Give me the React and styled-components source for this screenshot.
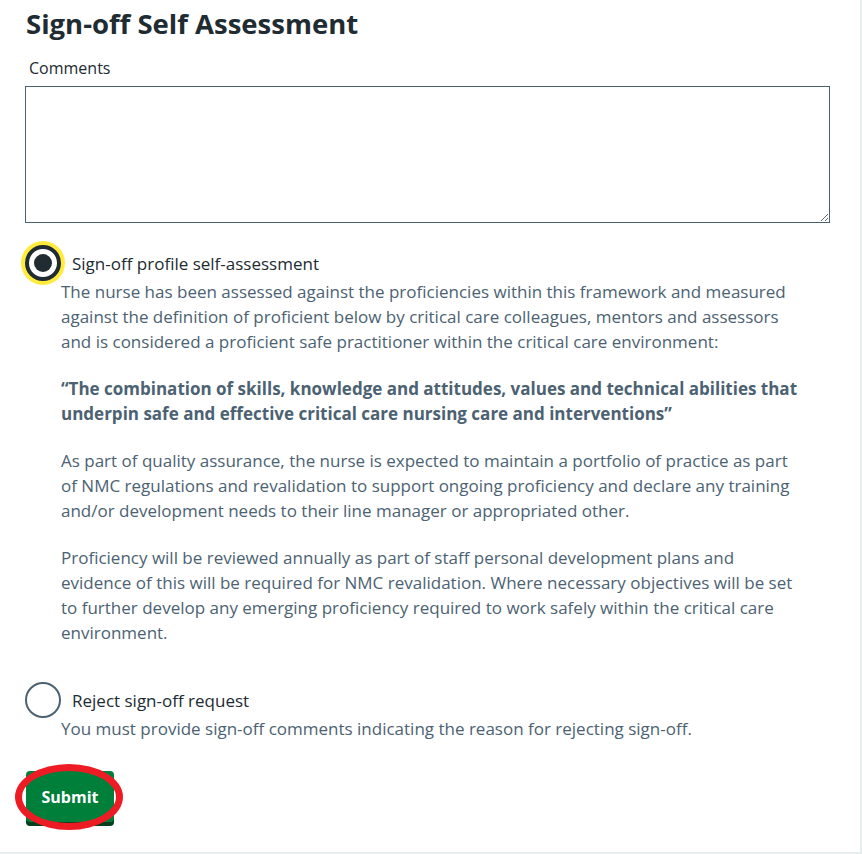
import React, { useState } from "react"
import styled, { createGlobalStyle } from "styled-components"

const GlobalStyle = createGlobalStyle`
  html, body {
    margin: 0;
    padding: 0;
    background: #ffffff;
  }
  body {
    font-family: "Open Sans", "Noto Sans", Arial, sans-serif;
    color: #212b32;
    -webkit-font-smoothing: antialiased;
  }
`

const Card = styled.div`
  width: 835px;
  height: 852px;
  padding: 0 0 0 25px;
  background: #fff;
  border-right: 2px solid #e8edee;
  border-bottom: 2px solid #e8edee;
  box-sizing: content-box;
`

const Heading = styled.h1`
  margin: 0;
  padding: 6px 0 0 1px;
  font-size: 27.5px;
  line-height: 36px;
  font-weight: 700;
  color: #212b32;
`

const FieldLabel = styled.label`
  display: block;
  margin: 14px 0 0 4px;
  font-size: 16px;
  line-height: 25px;
  color: #212b32;
`

const TextArea = styled.textarea`
  display: block;
  width: 805px;
  height: 137px;
  margin: 5px 0 0 0;
  box-sizing: border-box;
  border: 1px solid #4c6272;
  border-radius: 0;
  resize: vertical;
  font-family: inherit;
  font-size: 16px;
  padding: 4px;
  outline: none;
`

const Options = styled.div`
  display: flex;
  flex-direction: column;
  gap: 37px;
  margin-top: 22px;
`

const Option = styled.div`
  display: grid;
  grid-template-columns: 37px 744px;
  align-items: center;
`

const RadioCircle = styled.button`
  width: 36px;
  height: 36px;
  padding: 0;
  margin: 0;
  border-radius: 50%;
  box-sizing: border-box;
  background: #fff;
  cursor: pointer;
  display: flex;
  align-items: center;
  justify-content: center;
  border: ${p => (p.checked ? "4px solid #212b32" : "2px solid #4c6272")};
  box-shadow: ${p => (p.checked ? "0 0 0 4px #ffeb3b" : "none")};
  &::after {
    content: "";
    display: ${p => (p.checked ? "block" : "none")};
    width: 18px;
    height: 18px;
    border-radius: 50%;
    background: #212b32;
  }
`

const OptionLabel = styled.span`
  padding-left: 10px;
  font-size: 17px;
  line-height: 25px;
  color: #212b32;
`

const Hint = styled.div`
  grid-column: 2;
  margin: -2px 0 0 -1px;
  font-size: 17px;
  line-height: 25px;
  color: #4c6272;
  p {
    margin: 0 0 22px 0;
  }
  p:last-child {
    margin-bottom: 0;
  }
  strong {
    font-weight: 700;
  }
`

const Actions = styled.div`
  margin-top: 30px;
  position: relative;
  width: 90px;
`

const SubmitButton = styled.button`
  display: block;
  margin-left: 1px;
  width: 88px;
  height: 51px;
  border: none;
  border-radius: 4px;
  background: #007f3b;
  box-shadow: 0 4px 0 #00401e;
  color: #fff;
  font-family: inherit;
  font-weight: 700;
  font-size: 16px;
  cursor: pointer;
`

const Annotation = styled.div`
  position: absolute;
  left: -10px;
  top: -7px;
  width: 108px;
  height: 66px;
  box-sizing: border-box;
  border: 7px solid #ed1c24;
  border-radius: 50%;
  pointer-events: none;
`

export default function App() {
  const [choice, setChoice] = useState("signoff")

  return (
    <>
      <GlobalStyle />
      <Card>
        <Heading>Sign-off Self Assessment</Heading>
        <FieldLabel htmlFor="comments">Comments</FieldLabel>
        <TextArea id="comments" />
        <Options>
          <Option>
            <RadioCircle
              checked={choice === "signoff"}
              onClick={() => setChoice("signoff")}
            />
            <OptionLabel>Sign-off profile self-assessment</OptionLabel>
            <Hint>
              <p>
                The nurse has been assessed against the proficiencies within this
                framework and measured against the definition of proficient below
                by critical care colleagues, mentors and assessors and is
                considered a proficient safe practitioner within the critical care
                environment:
              </p>
              <p>
                <strong>
                  “The combination of skills, knowledge and attitudes, values and
                  technical abilities that underpin safe and effective critical
                  care nursing care and interventions”
                </strong>
              </p>
              <p>
                As part of quality assurance, the nurse is expected to maintain a
                portfolio of practice as part of NMC regulations and revalidation
                to support ongoing proficiency and declare any training and/or
                development needs to their line manager or appropriated other.
              </p>
              <p>
                Proficiency will be reviewed annually as part of staff personal
                development plans and evidence of this will be required for NMC
                revalidation. Where necessary objectives will be set to further
                develop any emerging proficiency required to work safely within
                the critical care environment.
              </p>
            </Hint>
          </Option>
          <Option>
            <RadioCircle
              checked={choice === "reject"}
              onClick={() => setChoice("reject")}
            />
            <OptionLabel>Reject sign-off request</OptionLabel>
            <Hint>
              You must provide sign-off comments indicating the reason for
              rejecting sign-off.
            </Hint>
          </Option>
        </Options>
        <Actions>
          <SubmitButton>Submit</SubmitButton>
          <Annotation />
        </Actions>
      </Card>
    </>
  )
}
